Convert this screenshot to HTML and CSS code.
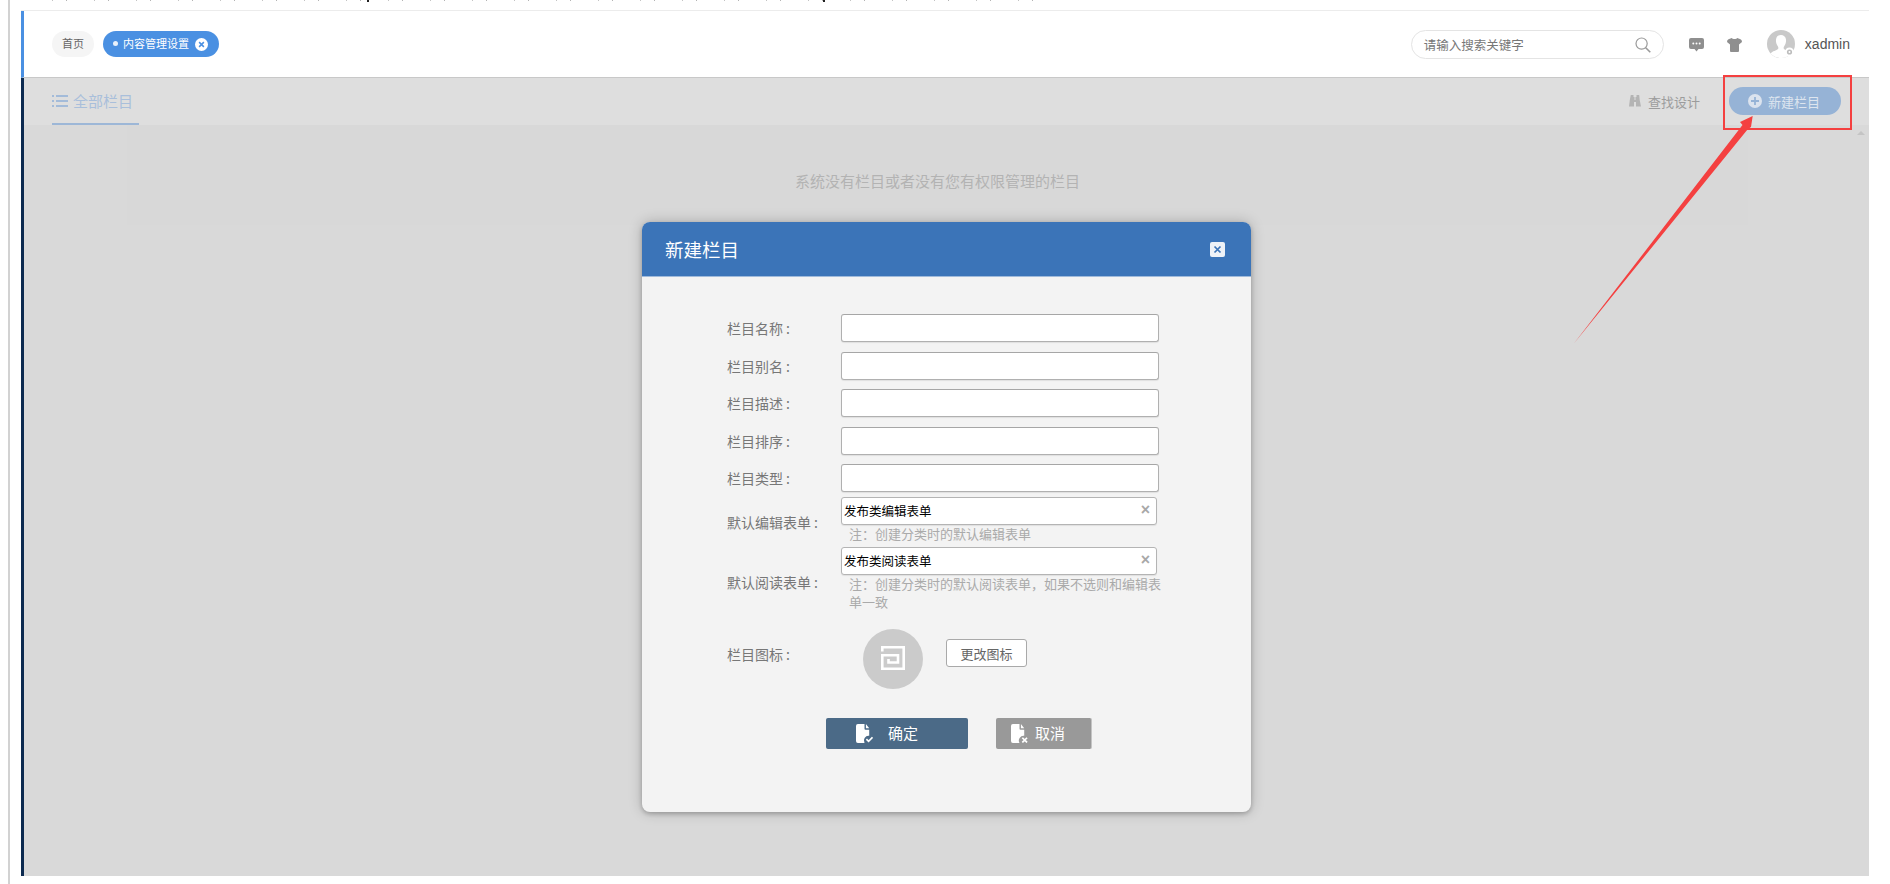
FILE: index.html
```html
<!DOCTYPE html>
<html lang="zh-CN">
<head>
<meta charset="utf-8">
<title>新建栏目</title>
<link rel="stylesheet" href="styles.css">
</head>
<body>
<div class="doc">
  <div class="doc-cut"></div>
  <div class="app">
    <header class="topbar">
      <nav class="tags">
        <span class="tag">首页</span>
        <span class="tag tag-active">
          <i class="tag-dot"></i>内容管理设置
          <svg class="tag-close" viewBox="0 0 12 12"><circle cx="6" cy="6" r="6" fill="#fff"/><path d="M3.8 3.8l4.4 4.4M8.2 3.8l-4.4 4.4" stroke="#4a90e2" stroke-width="1.4"/></svg>
        </span>
      </nav>
      <div class="top-right">
        <div class="search">
          <span class="search-text">请输入搜索关键字</span>
          <svg class="search-icon" viewBox="0 0 16 16" fill="none" stroke="#999" stroke-width="1.2"><circle cx="6.6" cy="6.6" r="5.6"/><path d="M10.7 10.7l4.6 4.6" stroke-width="1.6"/></svg>
        </div>
        <svg class="top-icon top-chat" viewBox="0 0 15 14"><path d="M2 0h11a2 2 0 0 1 2 2v7a2 2 0 0 1-2 2h-3.5L7.500 13.500 5.500 11H2a2 2 0 0 1-2-2V2a2 2 0 0 1 2-2z" fill="#8f8f8f"/><circle cx="4.300" cy="5.500" r="1" fill="#fff"/><circle cx="7.500" cy="5.500" r="1" fill="#fff"/><circle cx="10.700" cy="5.500" r="1" fill="#fff"/></svg>
        <svg class="top-icon top-shirt" viewBox="0 0 15 14"><path d="M4.800 0C5.500 1.300 9.500 1.300 10.200 0L13.500 1.200Q15 2 15 4L12 6.500V13Q12 14 11 14H4Q3 14 3 13V6.500L0 4Q0 2 1.500 1.200z" fill="#8f8f8f"/></svg>
        <svg class="avatar" viewBox="0 0 28 28"><circle cx="14" cy="14" r="14" fill="#c9c9c9"/><path d="M3.500 23.500c2-2.500 6-3 7.500-4.500 .6-.8.4-1.800-.2-2.800C9.300 14 8.800 12 9 9.500 9.300 6.500 11.500 5 14 5s4.700 1.500 5 4.500c.2 2.500-.3 4.500-1.800 6.700-.6 1-.8 2-.2 2.800 1.500 1.500 5.500 2 7.500 4.500A14 14 0 0 1 14 28 14 14 0 0 1 3.500 23.500z" fill="#fff"/><circle cx="22.500" cy="22" r="4.500" fill="#fff"/><circle cx="22.500" cy="22" r="2.600" fill="#bdbdbd"/><circle cx="22.500" cy="22" r="1" fill="#fff"/></svg>
        <span class="username">xadmin</span>
      </div>
    </header>
    <main class="main">
      <div class="tabbar">
        <div class="tab">
          <svg class="tab-icon" viewBox="0 0 16 12" fill="#a3bbd9"><path d="M0 0h2v2H0zM0 5h2v2H0zM0 10h2v2H0zM4 0h12v2H4zM4 5h12v2H4zM4 10h12v2H4z"/></svg>
          全部栏目
        </div>
        <div class="tab-actions">
          <span class="find">
            <svg class="find-icon" viewBox="0 0 12 12" fill="#b4b4b4"><path d="M1.800 0h2.700v2H5.500v3h1V2h1V0h2.700l.5 5L12 11.500H7V7H5v4.500H0L.8 5z"/></svg>
            查找设计
          </span>
          <span class="new-btn">
            <svg class="new-icon" viewBox="0 0 14 14"><circle cx="7" cy="7" r="7" fill="#dbe3ee"/><path d="M7 3v8M3 7h8" stroke="#96b3d6" stroke-width="1.800"/></svg>
            新建栏目
          </span>
        </div>
      </div>
      <div class="content">
        <div class="empty">系统没有栏目或者没有您有权限管理的栏目</div>
      </div>
    </main>
  </div>
</div>

<section class="modal">
  <header class="modal-head">
    <h2 class="modal-title">新建栏目</h2>
    <span class="modal-close"><svg viewBox="0 0 15 15"><path d="M4.500 4.500l6 6M10.500 4.500l-6 6" stroke="#3b74b8" stroke-width="1.700"/></svg></span>
  </header>
  <form class="modal-body">
    <div class="row"><label class="label">栏目名称<i class="colon">:</i></label><input class="input" type="text"></div>
    <div class="row"><label class="label">栏目别名<i class="colon">:</i></label><input class="input" type="text"></div>
    <div class="row"><label class="label">栏目描述<i class="colon">:</i></label><input class="input" type="text"></div>
    <div class="row"><label class="label">栏目排序<i class="colon">:</i></label><input class="input" type="text"></div>
    <div class="row row-last"><label class="label">栏目类型<i class="colon">:</i></label><input class="input" type="text"></div>

    <div class="row-select">
      <label class="label label-edit">默认编辑表单<i class="colon">:</i></label>
      <div class="field">
        <div class="select"><span>发布类编辑表单</span><b class="select-x">×</b></div>
        <p class="hint">注&#xFF1A;创建分类时的默认编辑表单</p>
      </div>
    </div>
    <div class="row-select">
      <label class="label label-read">默认阅读表单<i class="colon">:</i></label>
      <div class="field">
        <div class="select"><span>发布类阅读表单</span><b class="select-x">×</b></div>
        <p class="hint">注&#xFF1A;创建分类时的默认阅读表单&#xFF0C;如果不选则和编辑表单一致</p>
      </div>
    </div>

    <div class="row-icon">
      <label class="label label-icon">栏目图标<i class="colon">:</i></label>
      <div class="icon-circle">
        <svg viewBox="0 0 24 24" fill="none" stroke="#fff" stroke-width="2.600"><path d="M1.300 5.500V1.300H22.700V22.700H1.300V9.200H17V16.500H7.500V13"/></svg>
      </div>
      <button class="change-btn" type="button">更改图标</button>
    </div>

    <div class="actions">
      <button class="btn btn-ok" type="button">
        <svg class="btn-icon" viewBox="0 0 18 20"><path d="M2 0h7v5a1 1 0 0 0 1 1h4v6.500a5 5 0 0 0-5 7.500H2a2 2 0 0 1-2-2V2a2 2 0 0 1 2-2zM10.500 0L14 4.500h-3.500z" fill="#fff"/><path d="M11 16l2.300 2.300L17.500 14" fill="none" stroke="#fff" stroke-width="1.800"/></svg>
        <span class="btn-text">确定</span>
      </button>
      <button class="btn btn-cancel" type="button">
        <svg class="btn-icon" viewBox="0 0 18 20"><path d="M2 0h7v5a1 1 0 0 0 1 1h4v6.500a5 5 0 0 0-5 7.500H2a2 2 0 0 1-2-2V2a2 2 0 0 1 2-2zM10.500 0L14 4.500h-3.500z" fill="#fff"/><path d="M12 14.500l5 5M17 14.500l-5 5" fill="none" stroke="#fff" stroke-width="1.800"/></svg>
        <span class="btn-text">取消</span>
      </button>
    </div>
  </form>
</section>

<div class="note-box"></div>
<svg class="note-arrow" viewBox="0 0 200 240"><path d="M0.500 239L169.500 20 167 17 179.700 11 178 22 174.500 24.500z" fill="#f44040"/></svg>
<i class="scroll-up"></i>
</body>
</html>
```
FILE: styles.css
```css
* { box-sizing: border-box; }
html, body { margin: 0; padding: 0; }
body {
  width: 1890px;
  height: 884px;
  overflow: hidden;
  background: #fff;
  position: relative;
  font-family: "Noto Sans CJK SC", "Noto Sans", sans-serif;
}
.doc {
  margin-left: 8px;
  height: 884px;
  border-left: 2px solid #d2d2d2;
  padding-left: 11px;
}
.doc-cut {
  width: 1033px;
  height: 2px;
  margin-left: 4px;
  margin-bottom: 8px;
  background:
    linear-gradient(90deg, transparent 342px, #222 342px, #222 344px, transparent 344px, transparent 798px, #222 798px, #222 800px, transparent 800px),
    repeating-linear-gradient(90deg, transparent 0, transparent 27px, #c4c4c4 27px, #c4c4c4 28px, transparent 28px, transparent 41px, #b4b4b4 41px, #b4b4b4 42px);
  background-size: 100% 2px, 100% 1px;
  background-repeat: no-repeat;
}
.app {
  width: 1848px;
  height: 866px;
  display: flex;
  flex-direction: column;
  border-top: 1px solid #ececec;
}
.topbar {
  height: 67px;
  flex: none;
  display: flex;
  justify-content: space-between;
  align-items: flex-start;
  border-left: 3px solid #4a90e2;
  border-bottom: 1px solid #c8c8c8;
  background: #fff;
  padding-left: 28px;
}
.tags {
  display: flex;
  gap: 9px;
  padding-top: 20px;
}
.tag {
  height: 26px;
  padding: 0 10px 2px;
  border-radius: 13px;
  background: #f5f5f5;
  color: #666;
  font-size: 11px;
  line-height: 24px;
  display: flex;
  align-items: center;
}
.tag-active {
  width: 116px;
  padding: 0 0 2px 10px;
  background: #4a90e2;
  color: #fff;
}
.tag-dot {
  width: 5px;
  height: 5px;
  border-radius: 50%;
  background: #e8f1fb;
  margin-right: 5px;
}
.tag-close {
  width: 13px;
  height: 13px;
  margin-left: 6px;
  margin-bottom: -2px;
}
.top-right {
  display: flex;
  align-items: flex-start;
  padding-right: 19px;
}
.search {
  width: 253px;
  height: 29px;
  margin-top: 19px;
  margin-right: 25px;
  border: 1px solid #e4e4e4;
  border-radius: 15px;
  padding: 0 12px;
  display: flex;
  align-items: center;
  justify-content: space-between;
}
.search-text {
  font-size: 12.500px;
  color: #777;
  padding-bottom: 1px;
}
.search-icon {
  width: 16px;
  height: 16px;
}
.top-icon {
  width: 15px;
  height: 14px;
  margin-top: 27px;
}
.top-chat { margin-right: 23px; }
.top-shirt { margin-right: 25px; }
.avatar {
  width: 28px;
  height: 28px;
  margin-top: 19px;
  margin-right: 10px;
}
.username {
  margin-top: 23px;
  font-family: "Liberation Sans", sans-serif;
  font-size: 14px;
  line-height: 20px;
  color: #555;
}
.main {
  flex: 1;
  display: flex;
  flex-direction: column;
  border-left: 3px solid #0c2a50;
  background: #d9d9d9;
}
.tabbar {
  height: 47px;
  flex: none;
  display: flex;
  justify-content: space-between;
  background: #dedede;
  padding-left: 28px;
  padding-right: 28px;
}
.tab {
  width: 87px;
  height: 47px;
  display: flex;
  align-items: center;
  gap: 5px;
  border-bottom: 2px solid #9db7d7;
  font-size: 15px;
  color: #a9bfdb;
}
.tab-icon {
  width: 16px;
  height: 12px;
  flex: none;
}
.tab-actions {
  display: flex;
  align-items: flex-start;
}
.find {
  display: flex;
  align-items: center;
  gap: 7px;
  height: 28px;
  margin-top: 9px;
  margin-right: 29px;
  font-size: 13px;
  color: #9c9c9c;
}
.find-icon {
  width: 12px;
  height: 12px;
}
.new-btn {
  width: 112px;
  height: 28px;
  margin-top: 9px;
  border-radius: 14px;
  background: #96b3d6;
  color: #dde5ef;
  font-size: 13px;
  display: flex;
  align-items: center;
  gap: 6px;
  padding-left: 19px;
}
.new-icon {
  width: 14px;
  height: 14px;
}
.content {
  flex: 1;
  padding: 0 121px 0 103px;
}
.empty {
  height: 100px;
  padding-top: 44px;
  background: #d8d8d8;
  text-align: center;
  font-size: 15px;
  line-height: 24px;
  color: #b3b3b3;
}

/* dialog over the page */
.modal {
  position: absolute;
  left: 642px;
  top: 222px;
  width: 609px;
  height: 590px;
  border-radius: 8px;
  background: #f3f3f3;
  overflow: hidden;
  box-shadow: 0 0 14px rgba(0, 0, 0, .22), 0 2px 4px rgba(0, 0, 0, .2);
}
.modal-head {
  height: 55px;
  background: #3b74b8;
  border-bottom: 1px solid #9fbadb;
  display: flex;
  align-items: center;
  justify-content: space-between;
  padding: 0 26px 0 23px;
}
.modal-title {
  margin: 0;
  font-size: 18.500px;
  font-weight: 400;
  color: #fff;
}
.modal-close {
  width: 15px;
  height: 15px;
  background: #eef2f7;
  border-radius: 2px;
  display: block;
}
.modal-close svg { display: block; }
.modal-body {
  padding: 37px 0 0 85px;
}
.row {
  display: flex;
  align-items: center;
  height: 28px;
  margin-bottom: 9.500px;
}
.row.row-last { margin-bottom: 5px; }
.label {
  width: 114px;
  flex: none;
  font-size: 14px;
  line-height: 20px;
  color: #777;
}
.colon {
  font-style: normal;
  padding-left: 3px;
}
.input {
  width: 318px;
  height: 28px;
  padding: 0 6px;
  background: #fff;
  border: 1px solid #b0b0b0;
  border-top-color: #a6a6a6;
  border-radius: 3px;
  box-shadow: 0 1px 1px rgba(0, 0, 0, .08);
  outline: none;
}
.row-select {
  display: flex;
  align-items: flex-start;
}
.label-edit { margin-top: 15px; }
.label-read { margin-top: 25px; }
.field { width: 330px; }
.select {
  width: 316px;
  height: 28px;
  display: flex;
  align-items: center;
  justify-content: space-between;
  padding: 0 6px 2px 2px;
  background: #fff;
  border: 1px solid #b4b4b4;
  border-radius: 3px;
  box-shadow: 0 1px 1px rgba(0, 0, 0, .08);
  font-size: 12.500px;
  color: #000;
}
.select-x {
  font-family: "Liberation Sans", sans-serif;
  font-size: 16px;
  font-weight: 700;
  line-height: 16px;
  color: #a8a8a8;
}
.hint {
  width: 320px;
  margin: 0 0 4px 8px;
  padding: 0;
  font-size: 13px;
  line-height: 18px;
  color: #aaa;
}
.row-icon {
  display: flex;
  align-items: flex-start;
  margin-top: 14px;
}
.label-icon { margin-top: 15px; }
.icon-circle {
  width: 60px;
  height: 60px;
  margin-left: 22px;
  margin-right: 23px;
  padding-bottom: 2px;
  border-radius: 50%;
  background: #cbcbcb;
  display: flex;
  align-items: center;
  justify-content: center;
}
.icon-circle svg {
  width: 24px;
  height: 24px;
  display: block;
}
.change-btn {
  width: 81px;
  height: 28px;
  margin-top: 10px;
  padding: 0;
  background: #fff;
  border: 1px solid #a9a9a9;
  border-radius: 3px;
  font-family: inherit;
  font-size: 13px;
  color: #666;
}
.actions {
  display: flex;
  gap: 28px;
  margin-top: 29px;
  margin-left: 99px;
}
.btn {
  height: 31px;
  padding: 0;
  border: 0;
  border-radius: 2px;
  font-family: inherit;
  font-size: 15px;
  color: #fff;
  display: flex;
  align-items: center;
}
.btn-text { padding-bottom: 2px; }
.btn-ok {
  width: 142px;
  background: #4b6a87;
  padding-left: 30px;
  gap: 15px;
}
.btn-cancel {
  width: 96px;
  background: #999;
  border-right: 1px solid #c4c4c4;
  padding-left: 15px;
  gap: 7px;
}
.btn-icon {
  width: 17px;
  height: 19px;
  flex: none;
}

/* annotations drawn over the screenshot */
.note-box {
  position: absolute;
  left: 1723px;
  top: 75px;
  width: 129px;
  height: 55px;
  border: 2.500px solid #f44040;
}
.note-arrow {
  position: absolute;
  left: 1573px;
  top: 105px;
  width: 200px;
  height: 240px;
}
.scroll-up {
  position: absolute;
  left: 1857px;
  top: 131px;
  width: 0;
  height: 0;
  border-left: 4px solid transparent;
  border-right: 4px solid transparent;
  border-bottom: 4px solid #c4c4c4;
}
```
